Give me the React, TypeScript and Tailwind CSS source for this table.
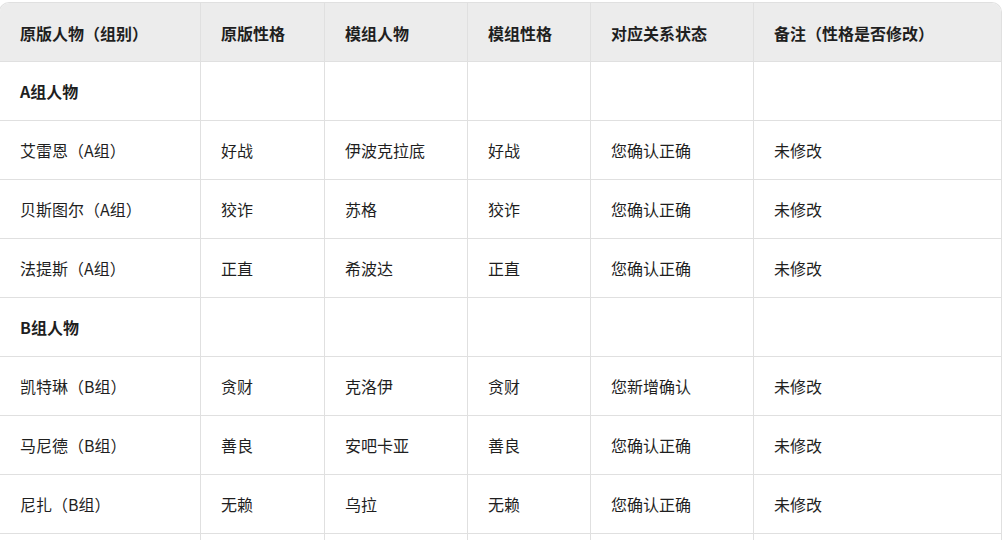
const headers = ["原版人物（组别）", "原版性格", "模组人物", "模组性格", "对应关系状态", "备注（性格是否修改）"];

type Row = string[] | { group: string };

const rows: Row[] = [
  { group: "A组人物" },
  ["艾雷恩（A组）", "好战", "伊波克拉底", "好战", "您确认正确", "未修改"],
  ["贝斯图尔（A组）", "狡诈", "苏格", "狡诈", "您确认正确", "未修改"],
  ["法提斯（A组）", "正直", "希波达", "正直", "您确认正确", "未修改"],
  { group: "B组人物" },
  ["凯特琳（B组）", "贪财", "克洛伊", "贪财", "您新增确认", "未修改"],
  ["马尼德（B组）", "善良", "安吧卡亚", "善良", "您确认正确", "未修改"],
  ["尼扎（B组）", "无赖", "乌拉", "无赖", "您确认正确", "未修改"],
  ["", "", "", "", "", ""],
];

const cols = "grid grid-cols-[201px_124px_143px_123px_163px_1fr]";

export default function App() {
  return (
    <div className="h-[540px] w-[1004px] overflow-hidden bg-white pt-[2px] font-['Noto_Sans_CJK_SC',sans-serif] text-[16px] text-[#1f1f1f]">
      <div className="-ml-px w-[1003px] overflow-hidden rounded-t-[10px] border border-b-0 border-[#e0e0e0]">
        <div className={`${cols} h-[58px] bg-[#ececec] font-bold`}>
          {headers.map((h, i) => (
            <div key={i} className={`flex items-center px-5 pt-px ${i < 5 ? "border-r border-[#e0e0e0]" : ""}`}>
              {h}
            </div>
          ))}
        </div>
        {rows.map((r, ri) => {
          const cells = Array.isArray(r) ? r : [r.group, "", "", "", "", ""];
          const bold = !Array.isArray(r);
          return (
            <div key={ri} className={`${cols} h-[59px] border-t border-[#e0e0e0]`}>
              {cells.map((c, i) => (
                <div
                  key={i}
                  className={`flex items-center px-5 ${i < 5 ? "border-r border-[#e0e0e0]" : ""} ${bold && i === 0 ? "font-bold" : ""}`}
                >
                  {c}
                </div>
              ))}
            </div>
          );
        })}
      </div>
    </div>
  );
}
